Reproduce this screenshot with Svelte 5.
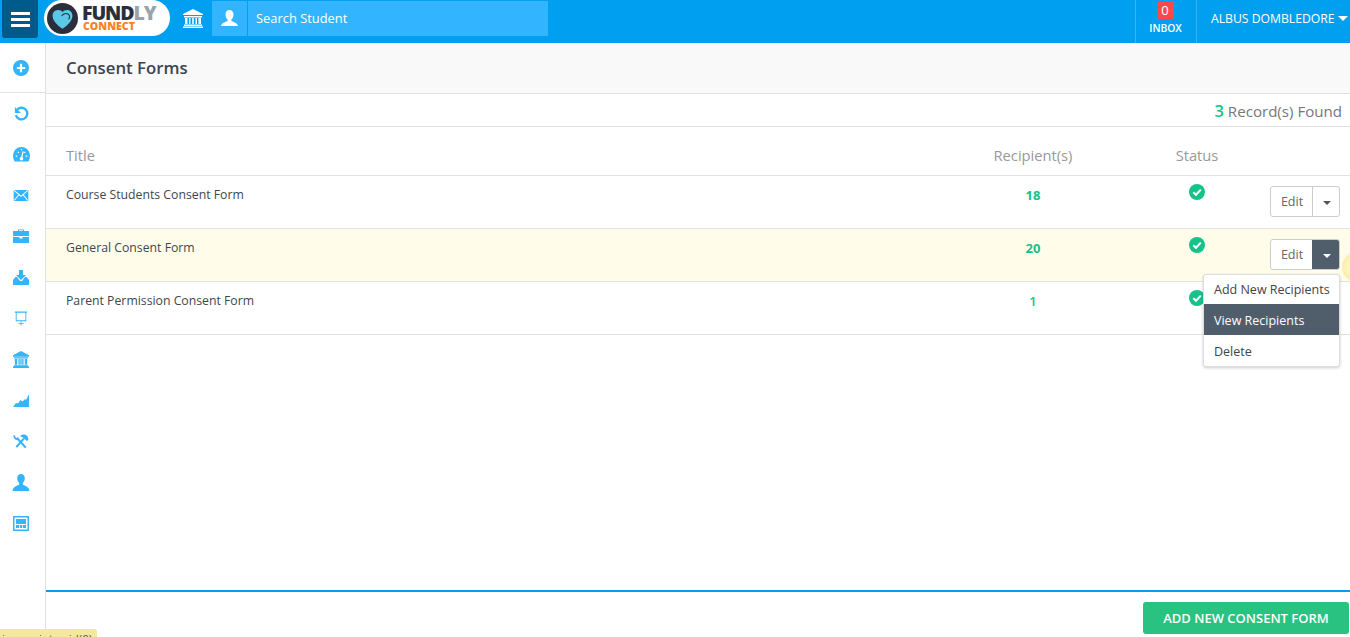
<script>
  const rows = [
    { title: 'Course Students Consent Form', count: 18 },
    { title: 'General Consent Form', count: 20, active: true },
    { title: 'Parent Permission Consent Form', count: 1 }
  ];
</script>

<div class="page">
  <header class="top">
    <button class="burger" aria-label="Menu"><span></span><span></span><span></span></button>
    <div class="logo">
      <svg class="logomark" viewBox="0 0 36 36" width="31" height="31">
        <circle cx="18" cy="18" r="18" fill="#2b2f3d"/>
        <path d="M18 30C11 25 6.500 20.500 6.500 14.500C6.500 10.500 9.500 8 13 8C15.500 8 17 9 18 10.500C19 9 21 8 23.500 8C27 8 29.500 10.800 29.500 14.500C29.500 20.500 25 25 18 30Z" fill="#5ac8e6"/>
        <path d="M17 15C19 11.500 24 11 26 14.500C26.500 16 26 18 25 19" fill="none" stroke="#2b2f3d" stroke-width="1.200"/>
      </svg>
      <div class="logotext">
        <div class="fundly">FUND<span>LY</span></div>
        <div class="connect">CONNECT</div>
      </div>
    </div>
    <svg class="bank" viewBox="0 0 22 20" width="22" height="20"><path fill="#fff" d="M11 1 21 6v1H1V6zM2 8h18v1.500H2zM3 10h2.500v6H3zM7 10h1.500v6H7zM10.200 10h1.600v6h-1.600zM13.500 10H15v6h-1.500zM16.500 10H19v6h-2.500zM2 16.500h18V18H2zM1 18.500h20V20H1z"/></svg>
    <div class="search">
      <div class="searchicon">
        <svg viewBox="0 0 20 20" width="19" height="19"><path fill="#fff" d="M10 1c2.700 0 4.200 2 4.200 4.700 0 2.200-1 4.300-2.200 5.300v1.500c2 1 6.500 2 7 5.500H1c.5-3.500 5-4.500 7-5.500V11C6.800 10 5.800 7.900 5.800 5.700 5.800 3 7.300 1 10 1z"/></svg>
      </div>
      <div class="searchbox">Search Student</div>
    </div>
    <div class="grow"></div>
    <div class="inbox">
      <span class="badge">0</span>
      <span class="inboxlabel">INBOX</span>
    </div>
    <div class="user">ALBUS DOMBLEDORE <i class="usercaret"></i></div>
  </header>

  <div class="body">
    <aside class="side">
      <div class="sidefirst">
        <svg viewBox="0 0 16 16" width="16" height="16"><circle cx="8" cy="8" r="8" fill="#33b4fb"/><path d="M8 3.800v8.400M3.800 8h8.400" stroke="#fff" stroke-width="2.200"/></svg>
      </div>
      <div class="sideitem">
        <svg viewBox="0 0 16 16" width="15" height="15"><path d="M3.600 3.600A6.200 6.200 0 1 1 2 9.800" fill="none" stroke="#33b4fb" stroke-width="2.500"/><path d="M1 1v6.500h6.500z" fill="#33b4fb"/></svg>
      </div>
      <div class="sideitem">
        <svg viewBox="0 0 16 14" width="17" height="15"><path fill="#33b4fb" d="M8 0a8 8 0 0 1 8 8c0 2-.6 3.800-1.500 5.500h-13C.6 11.800 0 10 0 8a8 8 0 0 1 8-8z"/><path d="M8 11 9.500 4M2.500 8.500h1.500M4.500 4.500l1 1M12 8.500h1.500M11.500 4.500l-1 1M8 1.800v1.200" stroke="#fff" stroke-width="1.200"/><circle cx="8" cy="11" r="1.700" fill="#fff"/></svg>
      </div>
      <div class="sideitem">
        <svg viewBox="0 0 16 12" width="16" height="11"><path fill="#33b4fb" d="M0 0h16v12H0z"/><path d="M.5.500 8 7l7.500-6.500M.5 11.500 5.500 5.500M15.500 11.500 10.500 5.500" fill="none" stroke="#fff" stroke-width="1.100"/></svg>
      </div>
      <div class="sideitem up">
        <svg viewBox="0 0 16 14" width="16" height="14"><path fill="#33b4fb" d="M5 2V.500h6V2h4.500a.5.500 0 0 1 .5.500V7H0V2.500A.5.500 0 0 1 .5 2zM6 2h4V1.300H6zM0 8h6.500v1.500h3V8H16v5.500a.5.500 0 0 1-.5.500H.5a.5.500 0 0 1-.5-.5z"/></svg>
      </div>
      <div class="sideitem">
        <svg viewBox="0 0 16 15" width="16" height="15"><path fill="#33b4fb" d="M6 0h4v5h3L8 10 3 5h3zM0 10l2.500-3H4l3 4h2l3-4h1.500L16 10v5H0z"/></svg>
      </div>
      <div class="sideitem">
        <svg viewBox="0 0 16 16" width="14" height="15"><path fill="#33b4fb" d="M1 0h14v1.500h-1V11H2V1.500H1zM3 1.500V10h10V1.500zM7.500 11.500h1V13H11v1H8.500v2h-1v-2H5v-1h2.500z"/></svg>
      </div>
      <div class="sideitem">
        <svg viewBox="0 0 18 18" width="18" height="17"><path fill="#33b4fb" d="M9 0l8.500 4.500V6H.5V4.500zM1.500 6.500h15V8h-15zM2.500 8.500h2.500v6H2.500zM6.300 8.500h1.400v6H6.300zM8.300 8.500h1.400v6H8.300zM10.300 8.500h1.400v6h-1.400zM13 8.500h2.500v6H13zM1.500 15h15v1.300h-15zM.5 16.500h17V18H.5z"/></svg>
      </div>
      <div class="sideitem">
        <svg viewBox="0 0 16 13" width="16" height="13"><path fill="#33b4fb" d="M0 13 3 9l2 .5L7.500 6l2 1.500L12 5l1 1 3-6v13z"/></svg>
      </div>
      <div class="sideitem">
        <svg viewBox="0 0 16 16" width="16" height="15"><path d="M3.500 4 13 14.500M11 5 3 14" fill="none" stroke="#33b4fb" stroke-width="2.200"/><path d="M.8 1.500C.5 4 2.500 6 5 5.300" fill="none" stroke="#33b4fb" stroke-width="2"/><path fill="#33b4fb" d="M7 2C9.500 0 13 .3 15 2.500L16 6l-1.800 1.500L9.500 3.500z"/></svg>
      </div>
      <div class="sideitem">
        <svg viewBox="0 0 18 18" width="18" height="17"><path fill="#33b4fb" d="M9 0c2.500 0 4 2 4 4.500 0 2-1 4-2 5v1.800c2 1 6.500 2 7 6.700H0c.5-4.700 5-5.700 7-6.700V9.500c-1-1-2-3-2-5C5 2 6.500 0 9 0z"/></svg>
      </div>
      <div class="sideitem">
        <svg viewBox="0 0 16 15" width="16" height="15"><path fill="#33b4fb" fill-rule="evenodd" d="M0 0h16v15H0zM1.500 1.500v12h13v-12z"/><path fill="#33b4fb" d="M3 3h10v5H3zM3 9h3v3H3zM6.800 9h2.400v3H6.800zM10 9h3v3h-3z"/></svg>
      </div>
    </aside>

    <main class="main">
      <div class="titlebar"><h1>Consent Forms</h1></div>
      <div class="records"><b>3</b> Record(s) Found</div>

      <div class="row head">
        <div class="title">Title</div>
        <div class="num">Recipient(s)</div>
        <div class="status">Status</div>
        <div></div>
      </div>

      {#each rows as r}
        <div class="row item" class:active={r.active}>
          <div class="title">{r.title}</div>
          <div class="num"><b class:small={r.count === 1}>{r.count}</b></div>
          <div class="status">
            <svg viewBox="0 0 16 16" width="16" height="16"><circle cx="8" cy="8" r="8" fill="#14c28a"/><path d="M4.300 8.200 7 10.800 11.800 5.600" fill="none" stroke="#fff" stroke-width="2"/></svg>
          </div>
          <div class="actions">
            <div class="btngroup">
              <span class="edit">Edit</span>
              <span class="caret" class:open={r.active}><i></i></span>
            </div>
            {#if r.active}
              <ul class="menu">
                <li class="first">Add New Recipients</li>
                <li class="sel">View Recipients</li>
                <li>Delete</li>
              </ul>
            {/if}
          </div>
        </div>
      {/each}

      <div class="grow"></div>
      <footer class="foot">
        <button class="add">ADD NEW CONSENT FORM</button>
      </footer>
    </main>
  </div>

  <div class="cursor"></div>
  <div class="statusbubble">javascript:void(0)</div>
</div>

<style>
  :global(body) { margin: 0; background: #fff; overflow: hidden; }
  .page {
    position: relative;
    width: 1350px;
    height: 637px;
    overflow: hidden;
    display: flex;
    flex-direction: column;
    font-family: "Open Sans", "Noto Sans", sans-serif;
    color: #444;
  }
  .grow { flex: 1; }

  .top {
    height: 43px;
    flex: none;
    background: #009ff0;
    display: flex;
    align-items: flex-start;
    color: #fff;
  }
  .burger {
    width: 36px;
    height: 38px;
    margin-left: 2px;
    padding: 0;
    border: 0;
    border-radius: 0 0 3px 3px;
    background: #005b8c;
    display: flex;
    flex-direction: column;
    align-items: center;
    justify-content: center;
    gap: 3px;
  }
  .burger span { display: block; width: 19px; height: 3px; background: #fff; }
  .logo {
    width: 126px;
    height: 36px;
    margin-left: 6px;
    background: #fff;
    border-radius: 18px;
    display: flex;
    align-items: center;
    padding-left: 3px;
    box-sizing: border-box;
  }
  .logomark { flex: none; }
  .logotext { margin-left: 4px; font-family: "Open Sans", sans-serif; font-weight: 800; }
  .fundly { font-size: 19.500px; line-height: 15px; letter-spacing: -1.100px; color: #2b2f3d; }
  .fundly span { color: #9aa3a8; }
  .connect { font-size: 10.600px; line-height: 10px; margin: 1px 0 0 1px; color: #f58226; }
  .bank { margin: 8px 0 0 12px; }
  .search { display: flex; margin: 1px 0 0 8px; height: 35px; gap: 1px; }
  .searchicon {
    width: 35px;
    background: #33b4ff;
    display: flex;
    align-items: center;
    justify-content: center;
  }
  .searchbox {
    width: 292px;
    padding-left: 8px;
    background: #33b4ff;
    font-size: 12.900px;
    line-height: 35px;
  }
  .inbox {
    width: 60px;
    height: 43px;
    border-left: 1px solid #33b4ff;
    border-right: 1px solid #33b4ff;
    display: flex;
    flex-direction: column;
    align-items: center;
  }
  .badge {
    width: 17px;
    height: 18px;
    margin: 1px 2px 0 0;
    background: #f9494f;
    border-radius: 2px;
    font-size: 13px;
    line-height: 18px;
    text-align: center;
  }
  .inboxlabel { font-size: 10.300px; line-height: 14px; margin: 2px 1px 0 0; font-weight: 600; }
  .user {
    margin-left: 14px;
    width: 139px;
    font-size: 12.200px;
    line-height: 37px;
    white-space: nowrap;
    flex: none;
  }
  .usercaret {
    display: inline-block;
    width: 0;
    height: 0;
    border: 5px solid transparent;
    border-top-color: #fff;
    border-bottom: 0;
    vertical-align: 2px;
  }

  .body { flex: 1; display: flex; min-height: 0; }
  .side {
    width: 45px;
    flex: none;
    border-right: 1px solid #e2e2e2;
    display: flex;
    flex-direction: column;
  }
  .sidefirst {
    height: 49px;
    padding-right: 3px;
    border-bottom: 1px solid #e2e2e2;
    display: flex;
    align-items: center;
    justify-content: center;
  }
  .sideitem {
    height: 41px;
    padding-right: 3px;
    flex: none;
    display: flex;
    align-items: center;
    justify-content: center;
  }
  .sideitem.up { padding-bottom: 2px; height: 39px; }
  .main { flex: 1; min-width: 0; display: flex; flex-direction: column; }
  .titlebar {
    background: #f9f9f9;
    border-bottom: 1px solid #e2e2e2;
    display: flex;
    align-items: center;
    padding: 0 0 2px 20px;
    height: 48px;
    flex: none;
  }
  h1 { margin: 0; font-size: 16.800px; font-weight: 600; color: #3b4450; }
  .records {
    height: 32px;
    border-bottom: 1px solid #e2e2e2;
    text-align: right;
    padding-right: 8px;
    font-size: 15.100px;
    line-height: 33px;
    color: #777;
    flex: none;
  }
  .records b { font-weight: 600; font-size: 16.500px; color: #14c28a; }

  .row {
    display: grid;
    grid-template-columns: 922px 130px 120px 132px;
    border-bottom: 1px solid #e2e2e2;
    flex: none;
  }
  .head { height: 48px; font-size: 14.700px; color: #999; line-height: 57px; }
  .row > .title { padding-left: 20px; }
  .num { text-align: center; }
  .row > .status { text-align: center; margin-left: 39px; margin-right: -39px; }
  .item { height: 52px; font-size: 12.250px; color: #3f4650; line-height: 17px; }
  .item .title { padding-top: 10px; }
  .item .num { padding-top: 11px; font-size: 13px; color: #14c28a; }
  .item .num b { font-weight: 700; }
  .item .num b.small { font-weight: 600; }
  .item .status { padding-top: 8px; }
  .active { background: #fffde9; }
  .actions { position: relative; }
  .btngroup {
    position: absolute;
    top: 10px;
    right: 10px;
    display: flex;
    height: 31px;
    width: 70px;
    border: 1px solid #ccc;
    border-radius: 3px;
    box-sizing: border-box;
    background: #fff;
    overflow: hidden;
    font-size: 12.500px;
    color: #666;
  }
  .edit { width: 40px; padding-left: 1px; text-align: center; line-height: 30px; }
  .caret {
    flex: 1;
    border-left: 1px solid #ccc;
    display: flex;
    align-items: center;
    justify-content: center;
    padding-left: 1px;
  }
  .caret i {
    width: 0;
    height: 0;
    border: 4px solid transparent;
    border-top-color: #555;
    border-bottom: 0;
    margin-top: 2px;
  }
  .caret.open { background: #505d6b; border-left-color: #505d6b; }
  .caret.open i { border-top-color: #fff; }
  .menu {
    position: absolute;
    z-index: 2;
    top: 45px;
    right: 10px;
    width: 137px;
    box-sizing: border-box;
    margin: 0;
    padding: 0;
    list-style: none;
    background: #fff;
    border: 1px solid #ddd;
    border-radius: 3px;
    box-shadow: 0 1px 3px rgba(0,0,0,.2);
    font-size: 12.500px;
    color: #444;
  }
  .menu li { height: 31px; line-height: 33px; padding-left: 10px; white-space: nowrap; }
  .menu li.first { height: 29px; line-height: 29px; }
  .menu li.sel { height: 31px; line-height: 33px; background: #505d6b; color: #fff; }

  .foot {
    height: 35px;
    border-top: 2px solid #009ff0;
    display: flex;
    justify-content: flex-end;
    flex: none;
    padding: 10px 1px 0 0;
  }
  .add {
    width: 206px;
    height: 32px;
    border: 0;
    padding: 0;
    border-radius: 3px;
    background: #29c281;
    color: #fff;
    font-family: inherit;
    font-size: 13px;
    font-weight: 600;
  }

  .cursor {
    position: absolute;
    left: 1342px;
    top: 252px;
    width: 30px;
    height: 30px;
    border-radius: 50%;
    background: radial-gradient(circle, #fff6c4 40%, #fce48a 100%);
  }
  .statusbubble {
    position: absolute;
    left: 0;
    top: 629px;
    width: 97px;
    height: 20px;
    box-sizing: border-box;
    background: #f5e79e;
    border-radius: 0 3px 0 0;
    font-size: 11.500px;
    line-height: 16px;
    padding: 2px 0 0 2px;
    color: #555;
    overflow: hidden;
  }
</style>
